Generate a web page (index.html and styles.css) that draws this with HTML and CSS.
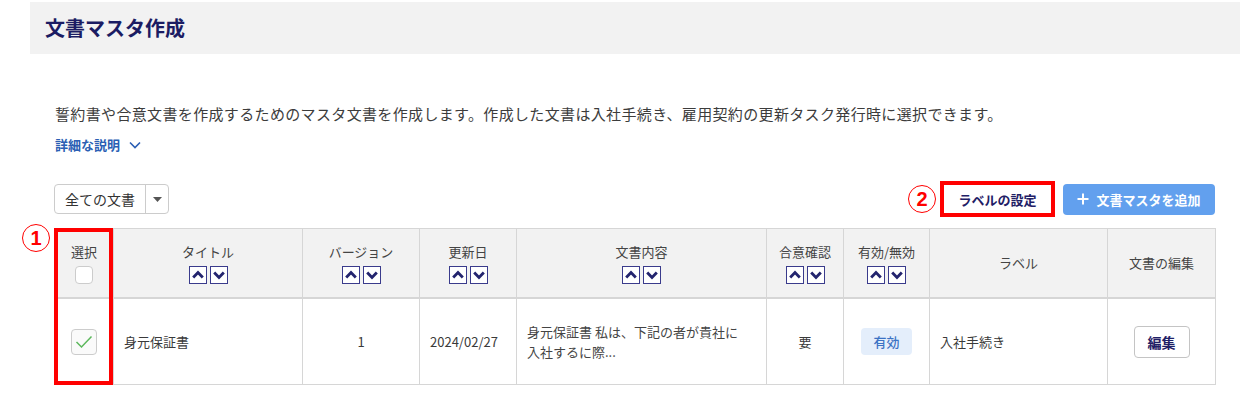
FILE: index.html
```html
<!DOCTYPE html>
<html lang="ja">
<head>
  <meta charset="UTF-8">
  <title>文書マスタ作成</title>
  <link rel="stylesheet" href="styles.css">
</head>
<body>

  <header class="page-head">
    <h1>文書マスタ作成</h1>
  </header>

  <main class="content">
    <p class="lead">誓約書や合意文書を作成するためのマスタ文書を作成します。作成した文書は入社手続き、雇用契約の更新タスク発行時に選択できます。</p>
    <a class="more" href="#">詳細な説明
      <svg width="12" height="8" viewBox="0 0 12 8"><path d="M1 1.5 L6 6.5 L11 1.5" fill="none" stroke="#2b5fb4" stroke-width="1.6"/></svg>
    </a>

    <div class="toolbar">
      <div class="select">
        <span class="select-label">全ての文書</span>
        <span class="select-caret"><svg width="9" height="5" viewBox="0 0 9 5"><path d="M0 0 H9 L4.5 5 Z" fill="#555"/></svg></span>
      </div>
      <div class="actions">
        <span class="num">2</span>
        <button class="btn btn-label marked">ラベルの設定</button>
        <button class="btn btn-add">
          <svg width="12" height="12" viewBox="0 0 12 12"><path d="M6 0.5 V11.5 M0.5 6 H11.5" stroke="#fff" stroke-width="2"/></svg>
          文書マスタを追加
        </button>
      </div>
    </div>

    <div class="table-wrap">
      <span class="num num-first">1</span>
      <div class="mark-col"></div>
      <table>
        <colgroup>
          <col style="width:59px">
          <col style="width:189px">
          <col style="width:117px">
          <col style="width:97px">
          <col style="width:250px">
          <col style="width:77px">
          <col style="width:86px">
          <col style="width:178px">
          <col style="width:108px">
        </colgroup>
        <thead>
          <tr>
            <th>
              <div class="th-label">選択</div>
              <span class="box box-sm"></span>
            </th>
            <th>
              <div class="th-label">タイトル</div>
              <div class="sorts"><span class="sort"><svg viewBox="0 0 10 10"><path d="M2 6.5 L5 3.5 L8 6.5"/></svg></span><span class="sort"><svg viewBox="0 0 10 10"><path d="M2 3.5 L5 6.5 L8 3.5"/></svg></span></div>
            </th>
            <th>
              <div class="th-label">バージョン</div>
              <div class="sorts"><span class="sort"><svg viewBox="0 0 10 10"><path d="M2 6.5 L5 3.5 L8 6.5"/></svg></span><span class="sort"><svg viewBox="0 0 10 10"><path d="M2 3.5 L5 6.5 L8 3.5"/></svg></span></div>
            </th>
            <th>
              <div class="th-label">更新日</div>
              <div class="sorts"><span class="sort"><svg viewBox="0 0 10 10"><path d="M2 6.5 L5 3.5 L8 6.5"/></svg></span><span class="sort"><svg viewBox="0 0 10 10"><path d="M2 3.5 L5 6.5 L8 3.5"/></svg></span></div>
            </th>
            <th>
              <div class="th-label">文書内容</div>
              <div class="sorts"><span class="sort"><svg viewBox="0 0 10 10"><path d="M2 6.5 L5 3.5 L8 6.5"/></svg></span><span class="sort"><svg viewBox="0 0 10 10"><path d="M2 3.5 L5 6.5 L8 3.5"/></svg></span></div>
            </th>
            <th>
              <div class="th-label">合意確認</div>
              <div class="sorts"><span class="sort"><svg viewBox="0 0 10 10"><path d="M2 6.5 L5 3.5 L8 6.5"/></svg></span><span class="sort"><svg viewBox="0 0 10 10"><path d="M2 3.5 L5 6.5 L8 3.5"/></svg></span></div>
            </th>
            <th>
              <div class="th-label">有効/無効</div>
              <div class="sorts"><span class="sort"><svg viewBox="0 0 10 10"><path d="M2 6.5 L5 3.5 L8 6.5"/></svg></span><span class="sort"><svg viewBox="0 0 10 10"><path d="M2 3.5 L5 6.5 L8 3.5"/></svg></span></div>
            </th>
            <th><div class="th-label">ラベル</div></th>
            <th><div class="th-label">文書の編集</div></th>
          </tr>
        </thead>
        <tbody>
          <tr>
            <td class="center">
              <span class="box box-lg"><svg width="18" height="14" viewBox="0 0 18 14"><path d="M1.5 7 L6.5 12 L16.5 1.5" fill="none" stroke="#5cb85c" stroke-width="1.5"/></svg></span>
            </td>
            <td>身元保証書</td>
            <td class="center">1</td>
            <td>2024/02/27</td>
            <td class="body-text">身元保証書 私は、下記の者が貴社に<br>入社するに際...</td>
            <td class="center">要</td>
            <td class="center"><span class="badge">有効</span></td>
            <td>入社手続き</td>
            <td class="center"><button class="btn btn-edit">編集</button></td>
          </tr>
        </tbody>
      </table>
    </div>
  </main>

</body>
</html>
```

FILE: styles.css
```css
body {
  margin: 0;
  font-family: "Noto Sans CJK JP", "Noto Sans", sans-serif;
  color: #3a3a3a;
  background-color: #fff;
}

.page-head {
  margin: 2px 0 0 30px;
  height: 52px;
  padding-left: 15px;
  display: flex;
  align-items: center;
  background-color: #f2f2f2;
}

h1 {
  margin: 0;
  font-size: 20px;
  line-height: 26px;
  font-weight: 700;
  color: #1b1c63;
}

.content {
  padding: 0 25px 0 54px;
}

.lead {
  margin: 50px 0 0 1px;
  font-size: 15px;
  line-height: 20px;
  letter-spacing: 0.35px;
  color: #3c3c3c;
}

.more {
  display: inline-flex;
  align-items: center;
  gap: 9px;
  margin: 12px 0 0 1px;
  font-size: 13px;
  line-height: 18px;
  font-weight: 700;
  color: #2b5fb4;
  text-decoration: none;
}

.toolbar {
  display: flex;
  justify-content: space-between;
  align-items: center;
  margin-top: 26px;
  height: 36px;
}

.select {
  display: flex;
  height: 30px;
  box-sizing: border-box;
  border: 1px solid #ccc;
  border-radius: 4px;
  background-color: #fff;
}

.select-label {
  width: 90px;
  display: flex;
  align-items: center;
  justify-content: center;
  font-size: 14px;
  color: #333;
  border-right: 1px solid #ccc;
}

.select-caret {
  width: 22px;
  display: flex;
  align-items: center;
  justify-content: center;
}

.actions {
  display: flex;
  align-items: center;
}

.num {
  width: 28px;
  height: 28px;
  box-sizing: border-box;
  border: 1.5px solid #f00;
  border-radius: 50%;
  display: flex;
  align-items: center;
  justify-content: center;
  font-family: "Liberation Sans", Arial, sans-serif;
  font-size: 20px;
  font-weight: 700;
  color: #f00;
  background-color: #fff;
}

.actions .num {
  margin-right: 4px;
}

.btn {
  font-family: inherit;
  cursor: pointer;
  display: inline-flex;
  align-items: center;
  justify-content: center;
  box-sizing: border-box;
}

.btn-label {
  width: 115px;
  height: 36px;
  background-color: #fff;
  font-size: 13px;
  font-weight: 700;
  color: #1f2066;
}

.marked {
  border: 4px solid #f00;
}

.btn-add {
  margin-left: 8px;
  width: 152px;
  height: 31px;
  gap: 7px;
  border: none;
  border-radius: 4px;
  background-color: #62a0ee;
  color: #fff;
  font-size: 13px;
  font-weight: 700;
}

.table-wrap {
  position: relative;
  margin-top: 11px;
  width: 1161px;
}

.num-first {
  position: absolute;
  left: -32px;
  top: -4px;
}

.mark-col {
  position: absolute;
  left: 0;
  top: 0;
  width: 59px;
  height: 157px;
  box-sizing: border-box;
  border: 4px solid #f00;
  z-index: 2;
}

table {
  width: 1161px;
  table-layout: fixed;
  border-collapse: collapse;
  font-size: 13px;
  color: #3a3a3a;
}

th, td {
  border: 1px solid #d6d6d6;
  padding: 0;
  vertical-align: middle;
}

th {
  height: 68px;
  background-color: #f2f2f2;
  font-weight: 400;
  text-align: center;
  color: #444;
}

thead tr {
  border-bottom: 2px solid #d6d6d6;
}

.th-label {
  line-height: 18px;
}

.sorts {
  display: flex;
  justify-content: center;
  gap: 3px;
  margin-top: 5px;
}

.sort {
  width: 18px;
  height: 18px;
  box-sizing: border-box;
  border: 1px solid #3a3b8c;
  background-color: #fff;
  display: flex;
}

.sort svg {
  width: 16px;
  height: 16px;
  fill: none;
  stroke: #23246e;
  stroke-width: 1.8;
}

td {
  height: 85px;
  padding-left: 10px;
  line-height: 20px;
}

td.center {
  text-align: center;
  padding-left: 0;
}

.body-text {
  color: #444;
}

.box {
  display: inline-flex;
  align-items: center;
  justify-content: center;
  box-sizing: border-box;
  border: 1px solid #ccc;
  background-color: #fff;
  vertical-align: middle;
}

.box-sm {
  width: 18px;
  height: 18px;
  border-radius: 4px;
  margin-top: 5px;
}

.box-lg {
  width: 26px;
  height: 26px;
  border-radius: 4px;
  background-color: #fafafa;
}

.badge {
  display: inline-block;
  width: 51px;
  height: 27px;
  line-height: 27px;
  border-radius: 4px;
  background-color: #e4eefb;
  color: #3b72c4;
  font-weight: 500;
}

.btn-edit {
  width: 56px;
  height: 32px;
  border: 1px solid #c4c4c4;
  border-radius: 4px;
  background-color: #fff;
  font-size: 14px;
  font-weight: 700;
  color: #1f2066;
}
```
